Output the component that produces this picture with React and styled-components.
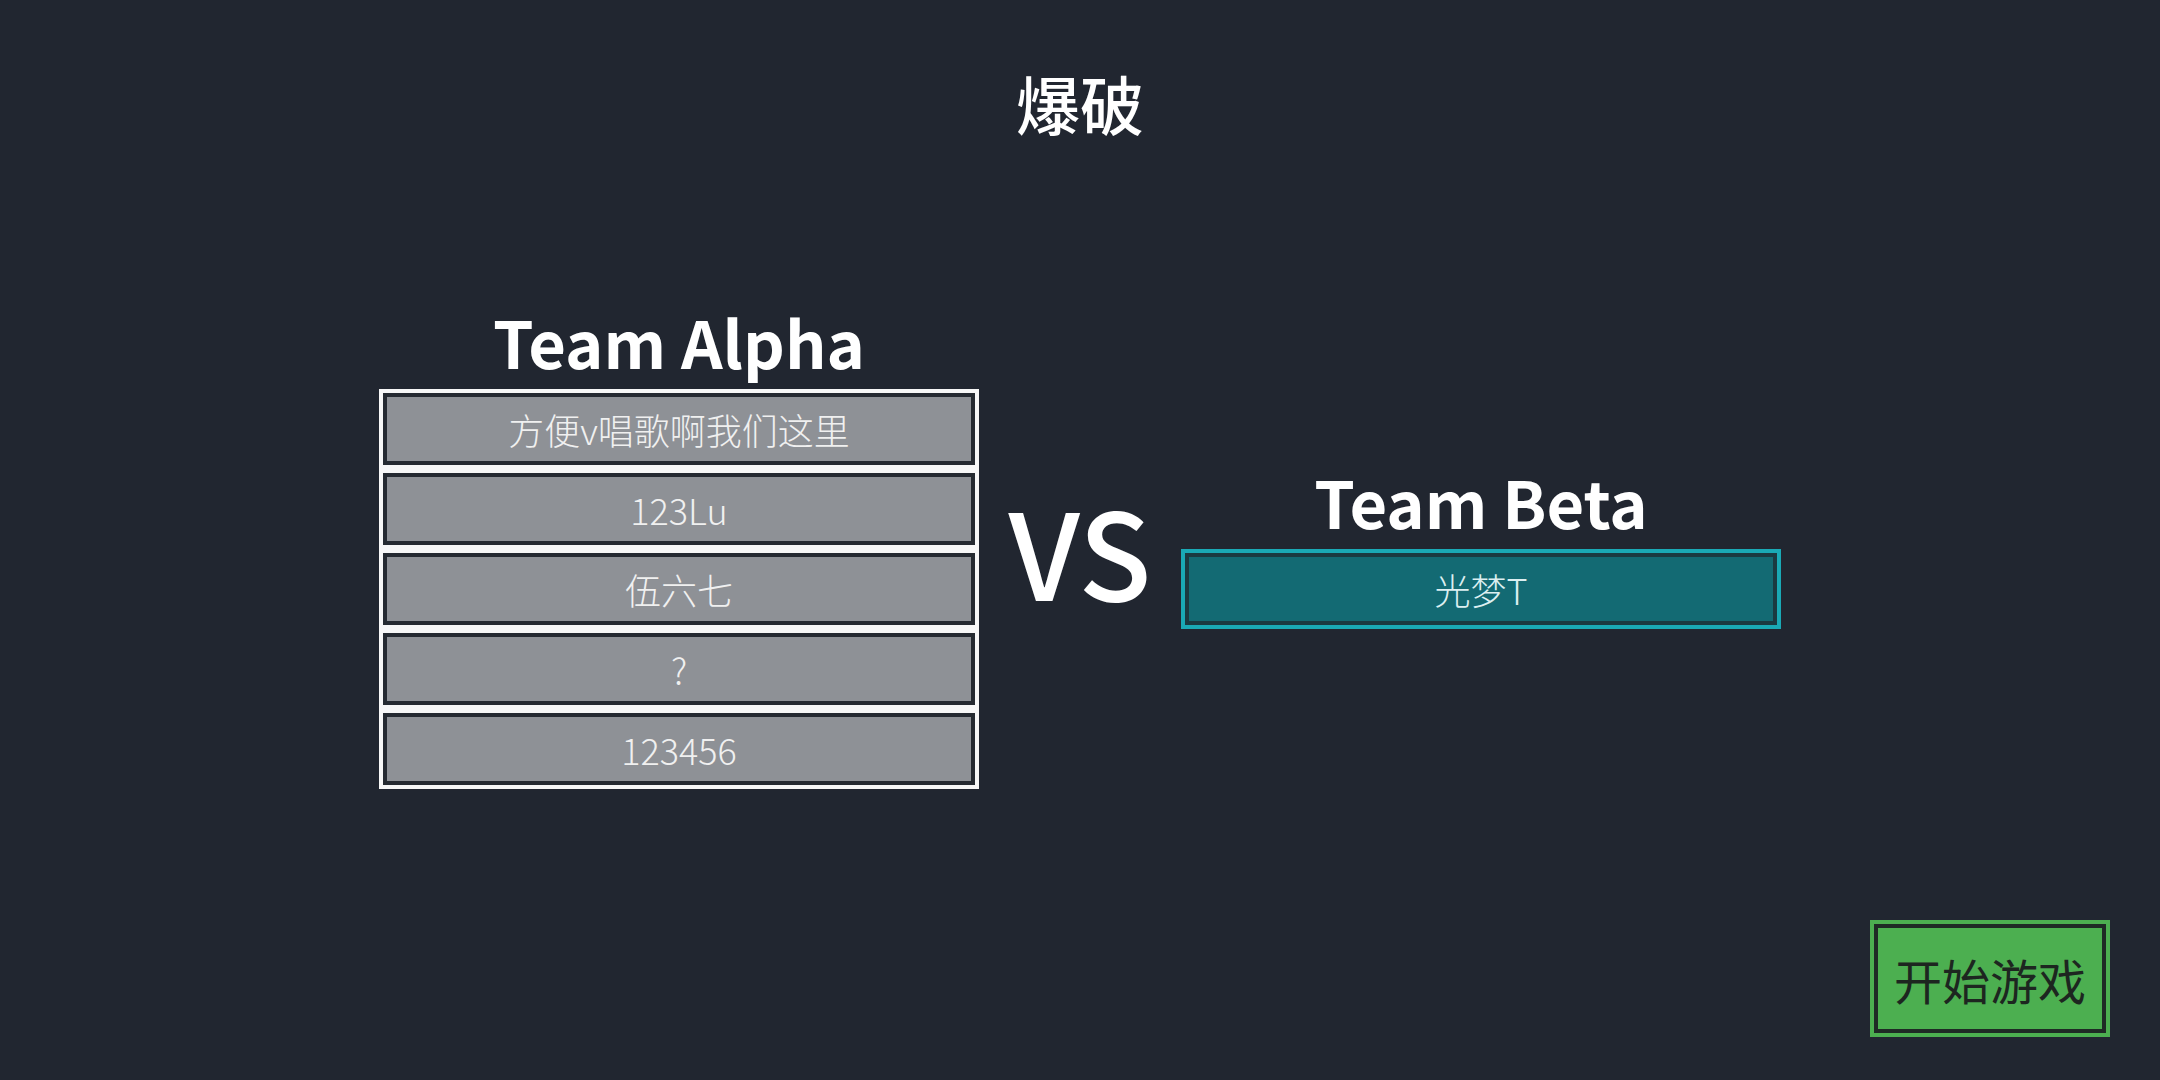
import React from 'react'
import styled, { createGlobalStyle } from 'styled-components'

const GlobalStyle = createGlobalStyle`
  html, body {
    margin: 0;
    padding: 0;
    background: #212630;
  }
  body {
    font-family: "Noto Sans CJK SC", "Noto Sans", sans-serif;
    color: #ffffff;
  }
`

const Page = styled.div`
  width: 2160px;
  height: 1080px;
  display: flex;
  flex-direction: column;
  background: #212630;
`

const Header = styled.header`
  padding: 70px 0 44px;
  display: flex;
  justify-content: center;
`

const Title = styled.h1`
  margin: 0;
  font-size: 64px;
  line-height: 64px;
  font-weight: 500;
  color: #ffffff;
`

const Arena = styled.main`
  flex: 1;
  display: flex;
  align-items: center;
  justify-content: center;
  gap: 11px;
`

const TeamColumn = styled.section`
  width: 600px;
  display: flex;
  flex-direction: column;
  align-items: stretch;
`

const TeamName = styled.h2`
  margin: 0 0 16px;
  font-size: 65px;
  line-height: 64px;
  font-weight: 700;
  text-align: center;
  color: #ffffff;
`

const Roster = styled.div`
  display: flex;
  flex-direction: column;
  gap: 8px;
  padding: 4px;
  background: ${p => p.$frame};
`

const PlayerSlot = styled.div`
  height: 72px;
  box-sizing: border-box;
  border: 4px solid ${p => p.$edge};
  background: ${p => p.$fill};
  display: flex;
  align-items: center;
  justify-content: center;
  font-size: 36px;
  font-weight: 300;
  color: ${p => p.$ink};
`

const Versus = styled.div`
  width: 180px;
  text-align: center;
  font-size: 120px;
  line-height: 120px;
  font-weight: 500;
  color: #ffffff;
`

const Footer = styled.footer`
  display: flex;
  justify-content: flex-end;
  padding: 0 50px 43px 0;
`

const StartButton = styled.button`
  width: 240px;
  height: 117px;
  padding: 4px;
  box-sizing: border-box;
  border: none;
  background: #4caf50;
  cursor: pointer;
  font-family: inherit;
`

const StartFace = styled.span`
  display: flex;
  align-items: center;
  justify-content: center;
  height: 100%;
  box-sizing: border-box;
  border: 4px solid #1f2a25;
  background: #4caf50;
  color: #1d2620;
  font-size: 48px;
  font-weight: 400;
`

const teams = {
  alpha: {
    name: 'Team Alpha',
    frame: '#f7f7f7',
    edge: '#252a31',
    fill: '#8e9196',
    ink: '#f0f0f0',
    players: ['方便v唱歌啊我们这里', '123Lu', '伍六七', '?', '123456'],
  },
  beta: {
    name: 'Team Beta',
    frame: '#1aa9b5',
    edge: '#1b3a41',
    fill: '#136a73',
    ink: '#dceff1',
    players: ['光梦T'],
  },
}

const Team = ({ team }) => (
  <TeamColumn>
    <TeamName>{team.name}</TeamName>
    <Roster $frame={team.frame}>
      {team.players.map((p, i) => (
        <PlayerSlot key={i} $edge={team.edge} $fill={team.fill} $ink={team.ink}>
          {p}
        </PlayerSlot>
      ))}
    </Roster>
  </TeamColumn>
)

const App = () => {
  return (
    <>
      <GlobalStyle />
      <Page>
        <Header>
          <Title>爆破</Title>
        </Header>
        <Arena>
          <Team team={teams.alpha} />
          <Versus>VS</Versus>
          <Team team={teams.beta} />
        </Arena>
        <Footer>
          <StartButton>
            <StartFace>开始游戏</StartFace>
          </StartButton>
        </Footer>
      </Page>
    </>
  )
}

export default App
